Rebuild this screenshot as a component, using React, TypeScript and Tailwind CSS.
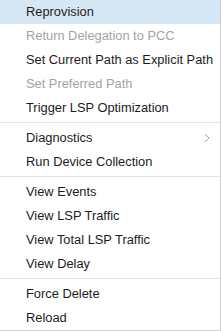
import React from 'react';

type Item = { label: string; disabled?: boolean; active?: boolean; submenu?: boolean } | 'sep';

const items: Item[] = [
  { label: 'Reprovision', active: true },
  { label: 'Return Delegation to PCC', disabled: true },
  { label: 'Set Current Path as Explicit Path' },
  { label: 'Set Preferred Path', disabled: true },
  { label: 'Trigger LSP Optimization' },
  'sep',
  { label: 'Diagnostics', submenu: true },
  { label: 'Run Device Collection' },
  'sep',
  { label: 'View Events' },
  { label: 'View LSP Traffic' },
  { label: 'View Total LSP Traffic' },
  { label: 'View Delay' },
  'sep',
  { label: 'Force Delete' },
  { label: 'Reload' },
];

export default function App() {
  return (
    <div className="w-[222px] h-[331px] bg-white">
      <div
        className="w-[221px] h-[331px] bg-white border-r border-b border-[#cfcfcf] flex flex-col"
        style={{ fontFamily: '"Liberation Sans", Arial, sans-serif' }}
      >
        {items.map((item, i) =>
          item === 'sep' ? (
            <div key={i} className="pt-[2px] pb-[3px]">
              <div className="h-px bg-[#e2e2e2]" />
            </div>
          ) : (
            <div
              key={i}
              className={`h-6 flex items-center pl-[26px] pr-2 text-[12.85px] leading-none ${
                item.active ? 'bg-[#d6e7f5]' : ''
              } ${item.disabled ? 'text-[#a3a3a3]' : 'text-[#1c1c1c]'}`}
            >
              <span className="flex-1 whitespace-nowrap">{item.label}</span>
              {item.submenu && (
                <svg width="6" height="10" viewBox="0 0 6 10" className="mr-[2px]">
                  <path d="M1 1l4 4-4 4" fill="none" stroke="#a0a0a0" strokeWidth="1" />
                </svg>
              )}
            </div>
          )
        )}
      </div>
    </div>
  );
}
